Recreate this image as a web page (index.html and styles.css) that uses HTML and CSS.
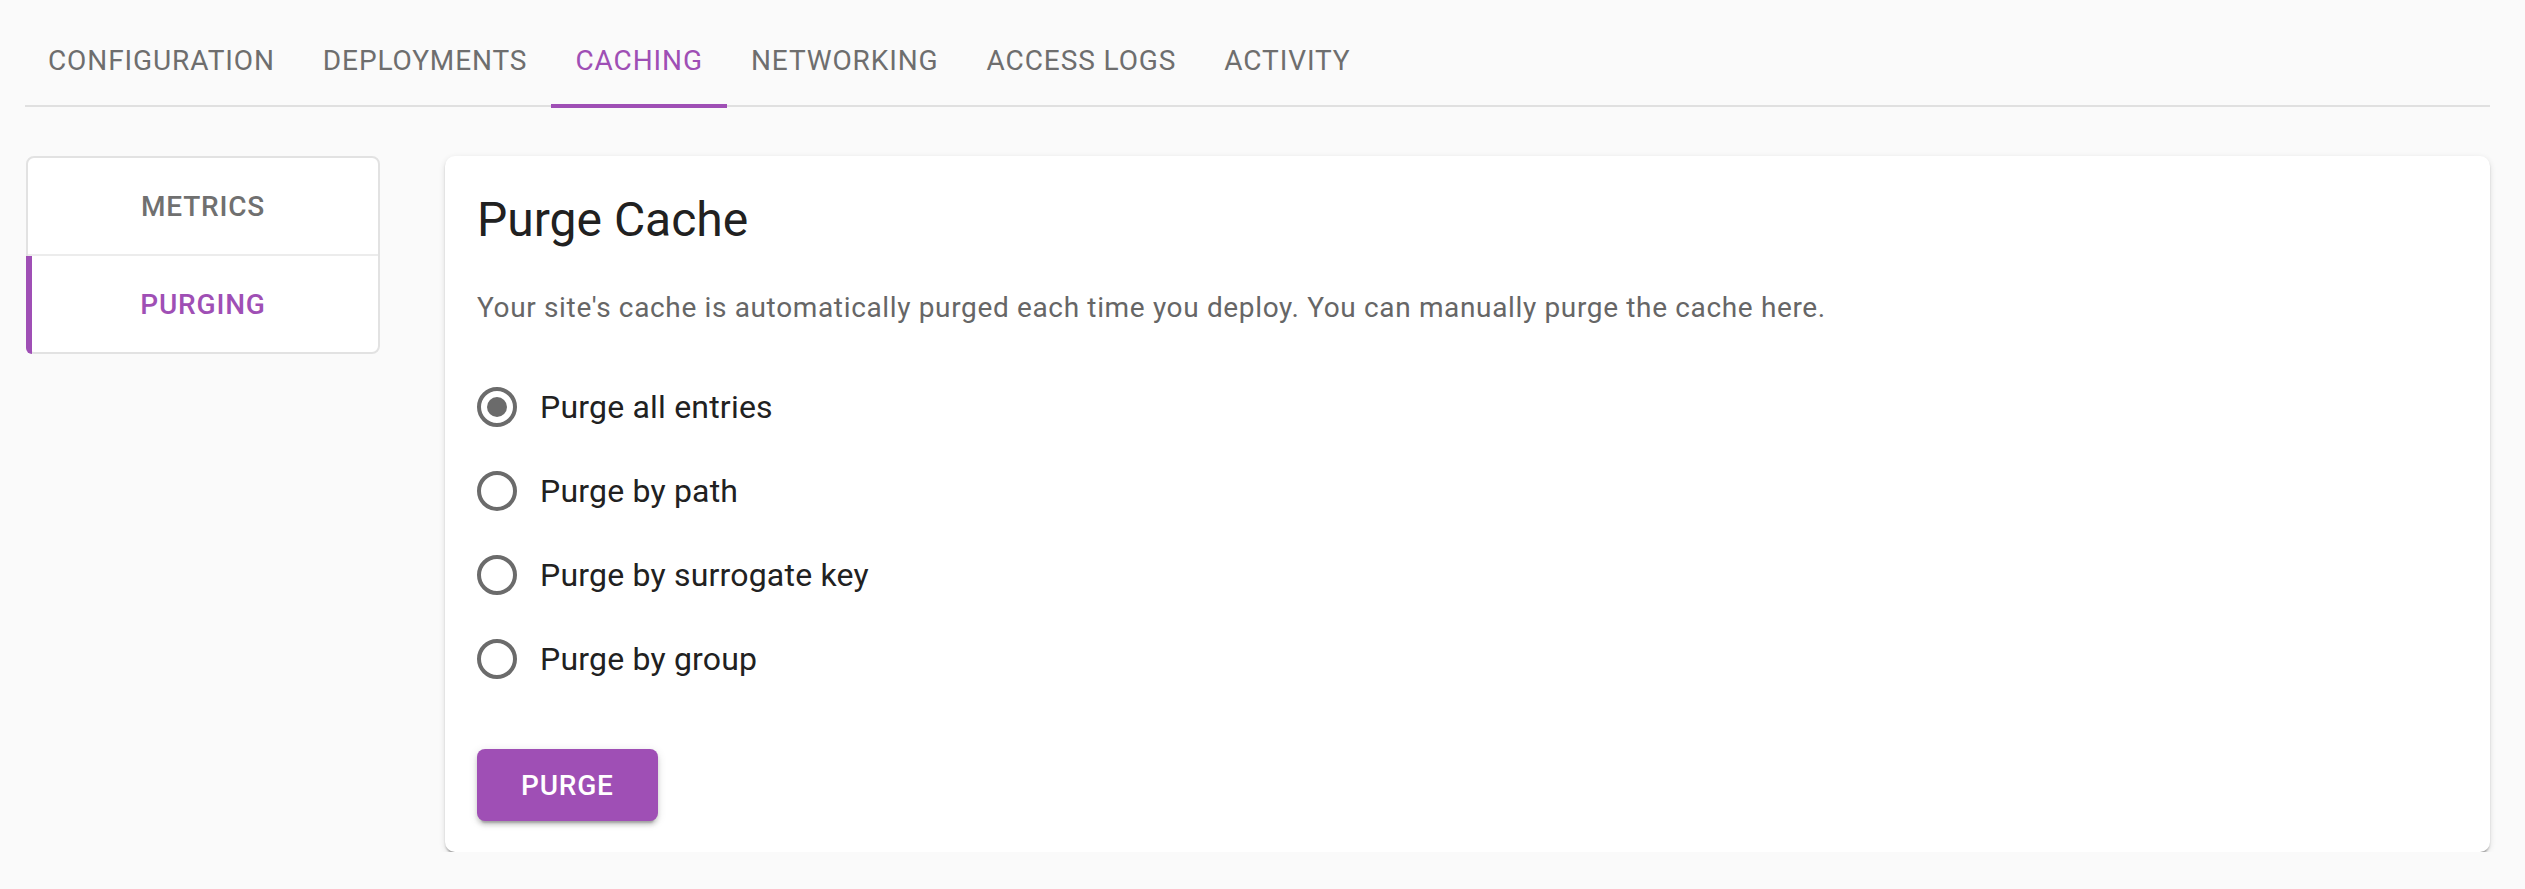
FILE: index.html
```html
<!DOCTYPE html>
<html lang="en">
<head>
<meta charset="utf-8">
<title>Purge Cache</title>
<link rel="stylesheet" href="styles.css">
</head>
<body>
<div class="page">
  <nav class="tabs">
    <div class="tab">Configuration</div>
    <div class="tab">Deployments</div>
    <div class="tab active">Caching<span class="indicator"></span></div>
    <div class="tab">Networking</div>
    <div class="tab">Access Logs</div>
    <div class="tab">Activity</div>
  </nav>
  <div class="content">
    <aside class="sidenav">
      <div class="side-item">Metrics</div>
      <div class="side-item active">Purging<span class="side-bar"></span></div>
    </aside>
    <section class="card">
      <h1 class="title">Purge Cache</h1>
      <p class="desc">Your site's cache is automatically purged each time you deploy. You can manually purge the cache here.</p>
      <div class="radios">
        <label class="radio-row">
          <span class="radio"><svg viewBox="0 0 24 24" width="48" height="48"><circle cx="12" cy="12" r="9" fill="none" stroke="currentColor" stroke-width="2"/><circle cx="12" cy="12" r="5" fill="currentColor"/></svg></span>
          <span class="radio-label">Purge all entries</span>
        </label>
        <label class="radio-row">
          <span class="radio"><svg viewBox="0 0 24 24" width="48" height="48"><circle cx="12" cy="12" r="9" fill="none" stroke="currentColor" stroke-width="2"/></svg></span>
          <span class="radio-label">Purge by path</span>
        </label>
        <label class="radio-row">
          <span class="radio"><svg viewBox="0 0 24 24" width="48" height="48"><circle cx="12" cy="12" r="9" fill="none" stroke="currentColor" stroke-width="2"/></svg></span>
          <span class="radio-label">Purge by surrogate key</span>
        </label>
        <label class="radio-row">
          <span class="radio"><svg viewBox="0 0 24 24" width="48" height="48"><circle cx="12" cy="12" r="9" fill="none" stroke="currentColor" stroke-width="2"/></svg></span>
          <span class="radio-label">Purge by group</span>
        </label>
      </div>
      <button class="btn">Purge</button>
    </section>
  </div>
</div>
</body>
</html>
```
FILE: styles.css
```css
html, body {
  margin: 0;
  padding: 0;
  background: #fafafa;
  font-family: Roboto, "Liberation Sans", sans-serif;
}

.page {
  padding: 12px 35px 0 25px;
}

.tabs {
  display: flex;
  border-bottom: 2px solid #e0e0e0;
  padding-left: 0;
}

.tab {
  position: relative;
  height: 93px;
  padding: 3px 24px 0;
  box-sizing: border-box;
  display: flex;
  align-items: center;
  font-size: 28px;
  font-weight: 400;
  letter-spacing: 0.9px;
  text-transform: uppercase;
  color: #6e6e6e;
}

.tab:first-child {
  padding-left: 23px;
}

.tab.active {
  color: #9f4fb5;
}

.indicator {
  position: absolute;
  left: 0;
  right: 0;
  bottom: -3px;
  height: 4px;
  background: #9f4fb5;
}

.content {
  display: flex;
  align-items: flex-start;
  gap: 65px;
  margin-top: 49px;
}

.sidenav {
  width: 354px;
  flex: none;
  box-sizing: border-box;
  background: #fff;
  border: 2px solid #e2e2e2;
  border-radius: 8px;
  margin-left: 1px;
}

.side-item {
  position: relative;
  height: 96px;
  display: flex;
  align-items: center;
  justify-content: center;
  font-size: 28px;
  font-weight: 500;
  letter-spacing: 0.8px;
  text-transform: uppercase;
  color: #707070;
}

.side-item + .side-item {
  border-top: 2px solid #ececec;
}

.side-item.active {
  color: #9f4fb5;
}

.side-bar {
  position: absolute;
  left: -2px;
  top: 0;
  bottom: -2px;
  width: 6px;
  background: #9f4fb5;
  border-bottom-left-radius: 6px;
}

.card {
  flex: 1;
  background: #fff;
  border-radius: 10px;
  padding: 32px 32px 31px;
  box-shadow: 0 4px 2px -2px rgba(0,0,0,0.2), 0 2px 2px 0 rgba(0,0,0,0.14), 0 2px 6px 0 rgba(0,0,0,0.12);
}

.title {
  margin: 0;
  font-size: 48px;
  line-height: 64px;
  font-weight: 400;
  color: #212121;
}

.desc {
  margin: 36px 0 0;
  font-size: 28px;
  line-height: 40px;
  letter-spacing: 0.65px;
  color: #666;
}

.radios {
  display: flex;
  flex-direction: column;
  margin-top: 37px;
  margin-left: -22px;
}

.radio-row {
  display: flex;
  align-items: center;
  height: 84px;
}

.radio {
  display: flex;
  padding: 18px;
  color: #6b6b6b;
}

.radio svg {
  display: block;
}

.radio-label {
  margin-left: 1px;
  font-size: 32px;
  letter-spacing: 0.2px;
  color: #212121;
}

.btn {
  display: block;
  margin-top: 48px;
  height: 72px;
  padding: 0 44px;
  border: none;
  border-radius: 8px;
  background: #9f4fb5;
  color: #fff;
  font-family: Roboto, "Liberation Sans", sans-serif;
  font-size: 28px;
  font-weight: 500;
  letter-spacing: 0.8px;
  text-transform: uppercase;
  box-shadow: 0 6px 2px -4px rgba(0,0,0,0.2), 0 4px 4px 0 rgba(0,0,0,0.14), 0 2px 10px 0 rgba(0,0,0,0.12);
}
```
